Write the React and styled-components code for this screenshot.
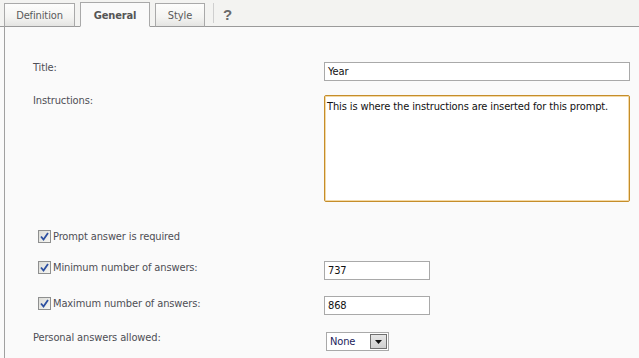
import React from 'react';
import styled, { createGlobalStyle } from 'styled-components';

const GlobalStyle = createGlobalStyle`
  html, body {
    margin: 0;
    padding: 0;
    background: #fafafa;
    font-family: "DejaVu Sans Condensed", "DejaVu Sans", sans-serif;
    font-stretch: condensed;
    font-size: 11px;
    letter-spacing: -0.12px;
  }
`;

const Page = styled.div`
  width: 639px;
  height: 358px;
  overflow: hidden;
  background: #fafafa;
`;

const TabBar = styled.div`
  display: flex;
  align-items: flex-end;
  height: 26px;
  padding-left: 4px;
  background: #f3f3f1;
  border-bottom: 1px solid #9a9a9a;
`;

const Tab = styled.div`
  box-sizing: border-box;
  display: flex;
  align-items: center;
  justify-content: center;
  height: ${(p) => (p.$active ? '25px' : '24px')};
  width: ${(p) => p.$width}px;
  margin-right: 5px;
  margin-bottom: -1px;
  border: 1px solid #a9a9a9;
  border-bottom-color: ${(p) => (p.$active ? '#fafafa' : '#9a9a9a')};
  background: ${(p) => (p.$active ? '#fafafa' : 'linear-gradient(#fdfdfc 0%, #f4f4f2 60%, #e4e4e2 100%)')};
  color: ${(p) => (p.$active ? '#555' : '#5a5a5a')};
  font-weight: ${(p) => (p.$active ? 'bold' : 'normal')};
  font-size: 11px;
  padding-top: 1px;
`;

const Divider = styled.div`
  width: 1px;
  height: 20px;
  margin: 0 9px 3px 3px;
  align-self: flex-end;
  background: #cfcfcf;
`;

const Help = styled.div`
  align-self: center;
  font-family: "Liberation Sans", Arial, sans-serif;
  font-weight: bold;
  font-size: 15px;
  color: #6a6a6a;
  margin-top: 2px;
`;

const Panel = styled.div`
  margin-left: 4px;
  height: 331px;
  border-left: 1px solid #a0a0a0;
  padding: 35px 0 0 28px;
`;

const Row = styled.div`
  display: flex;
  align-items: flex-start;
  margin-top: ${(p) => p.$gap || 0}px;
`;

const Label = styled.div`
  width: 291px;
  flex: none;
  color: #4e4e55;
  line-height: 13px;
  margin-top: -1px;
`;

const CheckLabel = styled.label`
  width: 286px;
  flex: none;
  margin-left: 5px;
  display: flex;
  align-items: center;
  gap: 2px;
  color: #4e4e55;
  line-height: 13px;
  margin-top: ${(p) => p.$offset || 0}px;
`;

const Box = styled.span`
  box-sizing: border-box;
  width: 13px;
  height: 13px;
  flex: none;
  border: 1px solid #8e8f8f;
  background: linear-gradient(135deg, #dcdcd7 0%, #f6f6f3 100%);
  display: flex;
  align-items: center;
  justify-content: center;
`;

const TextInput = styled.div`
  box-sizing: border-box;
  width: ${(p) => p.$width}px;
  height: 19px;
  border: 1px solid #a9a9a9;
  background: #fff;
  padding: 0 3px;
  line-height: 17px;
  color: #111;
`;

const TextArea = styled.div`
  box-sizing: border-box;
  width: 306px;
  height: 107px;
  border: 1px solid #c58d2a;
  border-radius: 2px;
  box-shadow: inset 0 0 0 1px #f3d9a6;
  background: #fff;
  padding: 4px 2px;
  line-height: 13px;
  color: #111;
`;

const Select = styled.div`
  box-sizing: border-box;
  display: flex;
  align-items: center;
  width: 63px;
  height: 19px;
  margin-left: 2px;
  border: 1px solid #a9a9a9;
  background: #fff;
  color: #1c1c5c;
`;

const SelectValue = styled.span`
  flex: 1;
  padding-left: 3px;
`;

const SelectButton = styled.span`
  box-sizing: border-box;
  width: 17px;
  height: 15px;
  margin-right: 1px;
  border: 1px solid #6f6f6f;
  background: linear-gradient(#e6e6e6, #cfcfcf);
  display: flex;
  align-items: center;
  justify-content: center;
`;

function Check() {
  return (
    <Box>
      <svg width="9" height="9" viewBox="0 0 9 9">
        <path d="M1 4.5 L3.5 7.5 L8 1" fill="none" stroke="#2c4fa0" strokeWidth="1.8" />
      </svg>
    </Box>
  );
}

export default function App() {
  return (
    <Page>
      <GlobalStyle />
      <TabBar>
        <Tab $width={71}>Definition</Tab>
        <Tab $width={70} $active>General</Tab>
        <Tab $width={50}>Style</Tab>
        <Divider />
        <Help>?</Help>
      </TabBar>
      <Panel>
        <Row>
          <Label>Title:</Label>
          <TextInput $width={306}>Year</TextInput>
        </Row>
        <Row $gap={14}>
          <Label>Instructions:</Label>
          <TextArea>This is where the instructions are inserted for this prompt.</TextArea>
        </Row>
        <Row $gap={28}>
          <CheckLabel>
            <Check />
            Prompt answer is required
          </CheckLabel>
        </Row>
        <Row $gap={18}>
          <CheckLabel>
            <Check />
            Minimum number of answers:
          </CheckLabel>
          <TextInput $width={106}>737</TextInput>
        </Row>
        <Row $gap={16}>
          <CheckLabel $offset={1}>
            <Check />
            Maximum number of answers:
          </CheckLabel>
          <TextInput $width={106}>868</TextInput>
        </Row>
        <Row $gap={17}>
          <Label>Personal answers allowed:</Label>
          <Select>
            <SelectValue>None</SelectValue>
            <SelectButton>
              <svg width="7" height="4" viewBox="0 0 7 4">
                <path d="M0 0 H7 L3.5 4 Z" fill="#111" />
              </svg>
            </SelectButton>
          </Select>
        </Row>
      </Panel>
    </Page>
  );
}
